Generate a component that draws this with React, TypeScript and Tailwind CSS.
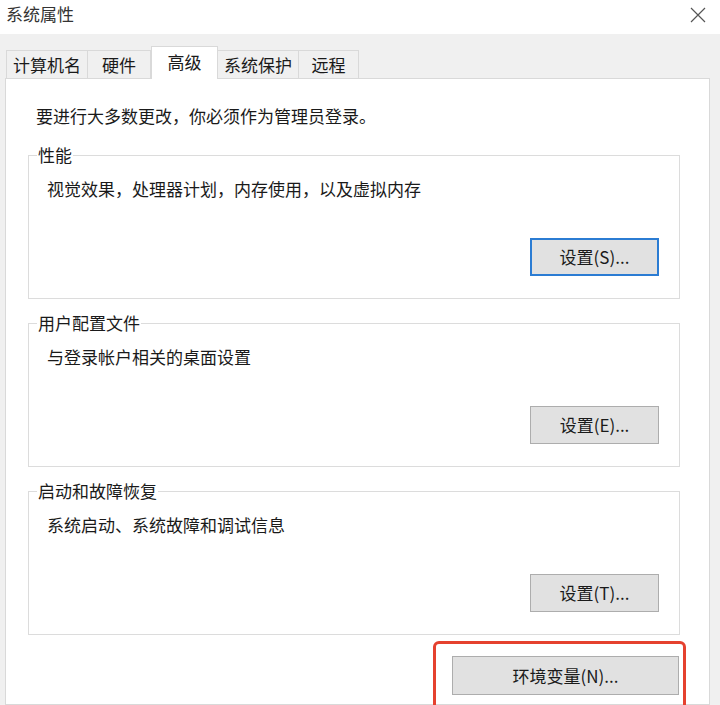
import React from 'react';

const font = { fontFamily: '"Noto Sans CJK SC", "Noto Sans", sans-serif' };

const tabs = [
	{ label: '计算机名', w: 'w-[82px]' },
	{ label: '硬件', w: 'w-[64px]' },
	{ label: '高级', w: 'w-[67px]', active: true },
	{ label: '系统保护', w: 'w-[82px]' },
	{ label: '远程', w: 'w-[61px]' },
];

const SettingButton = ({ label, focused }: { label: string; focused?: boolean }) => (
	<button
		type="button"
		className={
			'w-[129px] h-[38px] bg-[#e1e1e1] text-[17px] text-[#1a1a1a] flex items-center justify-center ' +
			(focused ? 'border-2 border-[#2b7cd3]' : 'border border-[#adadad]')
		}
	>
		{label}
	</button>
);

const Group = ({ title, desc, button, focused }: { title: string; desc: string; button: string; focused?: boolean }) => (
	<fieldset className="w-[652px] border border-[#dcdcdc] ml-[22px] pr-[20px] pb-[22px] pt-[11px]">
		<legend className="ml-[8px] px-[1px] text-[17px] leading-[22px] text-[#1a1a1a]">{title}</legend>
		<div className="pl-[18px] text-[17px] leading-[24px] text-[#1a1a1a]">{desc}</div>
		<div className="flex justify-end mt-[37px]">
			<SettingButton label={button} focused={focused} />
		</div>
	</fieldset>
);

export default function App() {
	return (
		<div className="w-[720px] h-[705px] overflow-hidden bg-[#f0f0f0] flex flex-col" style={font}>
			<div className="h-[34px] bg-white flex items-start justify-between pl-[6px] pr-[12px] pt-[1px] shrink-0">
				<span className="text-[17px] leading-[26px] text-[#333]">系统属性</span>
				<svg width="16" height="16" viewBox="0 0 16 16" className="text-[#555] mt-[6px] mr-[2px]">
					<path d="M1 1L15 15M15 1L1 15" stroke="currentColor" strokeWidth="1.2" fill="none" />
				</svg>
			</div>

			<div className="flex items-end pl-[6px] mt-[12px] h-[33px] shrink-0 relative z-10">
				{tabs.map((t) =>
					t.active ? (
						<div
							key={t.label}
							className={`${t.w} h-[33px] bg-white border border-b-0 border-[#d9d9d9] flex justify-center pt-[2px] text-[17px] text-[#1a1a1a]`}
						>
							{t.label}
						</div>
					) : (
						<div
							key={t.label}
							className={`${t.w} h-[28px] mb-[1px] border border-b-0 border-[#d9d9d9] flex items-center justify-center text-[17px] text-[#1a1a1a] -ml-px first:ml-0`}
						>
							{t.label}
						</div>
					)
				)}
			</div>

			<div className="ml-[5px] w-[705px] flex-1 -mt-px bg-white border border-[#d9d9d9] flex flex-col">
				<div className="pl-[30px] pt-[25px] text-[17px] leading-[24px] text-[#1a1a1a]">
					要进行大多数更改，你必须作为管理员登录。
				</div>
				<div className="mt-[16px] flex flex-col gap-[13px]">
					<Group title="性能" desc="视觉效果，处理器计划，内存使用，以及虚拟内存" button="设置(S)..." focused />
					<Group title="用户配置文件" desc="与登录帐户相关的桌面设置" button="设置(E)..." />
					<Group title="启动和故障恢复" desc="系统启动、系统故障和调试信息" button="设置(T)..." />
				</div>
				<div className="flex justify-end pr-[30px] mt-[21px]">
					<div className="relative">
						<button
							type="button"
							className="w-[227px] h-[39px] bg-[#e1e1e1] border border-[#adadad] text-[17px] text-[#1a1a1a] flex items-center justify-center"
						>
							环境变量(N)...
						</button>
						<span className="absolute -left-[19px] -right-[7px] -top-[15px] h-[80px] border-[3px] border-[#e5412f] rounded-[6px] pointer-events-none" />
					</div>
				</div>
			</div>
		</div>
	);
}
